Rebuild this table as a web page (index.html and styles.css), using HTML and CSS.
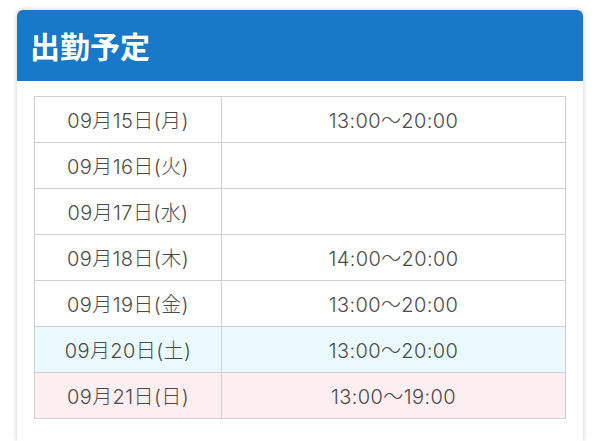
FILE: index.html
```html
<!DOCTYPE html>
<html lang="ja">
<head>
<meta charset="utf-8">
<link rel="stylesheet" href="styles.css">
</head>
<body>
<div class="card">
  <div class="card-head">出勤予定</div>
  <div class="card-body">
    <table class="sched">
      <tr><td class="date">09月15日(月)</td><td class="time">13:00～20:00</td></tr>
      <tr><td class="date">09月16日(火)</td><td class="time"></td></tr>
      <tr><td class="date">09月17日(水)</td><td class="time"></td></tr>
      <tr><td class="date">09月18日(木)</td><td class="time">14:00～20:00</td></tr>
      <tr><td class="date">09月19日(金)</td><td class="time">13:00～20:00</td></tr>
      <tr class="sat"><td class="date">09月20日(土)</td><td class="time">13:00～20:00</td></tr>
      <tr class="sun"><td class="date">09月21日(日)</td><td class="time">13:00～19:00</td></tr>
    </table>
  </div>
</div>
</body>
</html>
```
FILE: styles.css
```css
html, body {
  margin: 0;
  padding: 0;
  background: #ffffff;
}
body {
  padding: 10px 17px 0 17px;
  font-family: "Noto Sans CJK JP", "Noto Sans", sans-serif;
}
.card {
  background: #ffffff;
  border-radius: 6px 6px 0 0;
  box-shadow: 0 0 5px rgba(0,0,0,0.22);
  height: 431px;
}
.card-head {
  background: #1879c9;
  color: #ffffff;
  font-size: 30px;
  font-weight: bold;
  height: 71px;
  line-height: 71px;
  padding-left: 13px;
  border-radius: 6px 6px 0 0;
}
.card-body {
  padding: 15px 17px 0 17px;
}
.sched {
  width: 100%;
  border-collapse: collapse;
  color: #4a4a4a;
  font-family: "Inter", "Noto Sans CJK JP", sans-serif;
  font-size: 20px;
  font-weight: 300;
  letter-spacing: 0.4px;
}
.sched td {
  border: 1px solid #cfcfcf;
  height: 45px;
  padding: 0;
  text-align: center;
}
.sched td.date {
  width: 186px;
}
.sched tr.sat td {
  background: #e9f9fd;
}
.sched tr.sun td {
  background: #fdeef1;
}
```
